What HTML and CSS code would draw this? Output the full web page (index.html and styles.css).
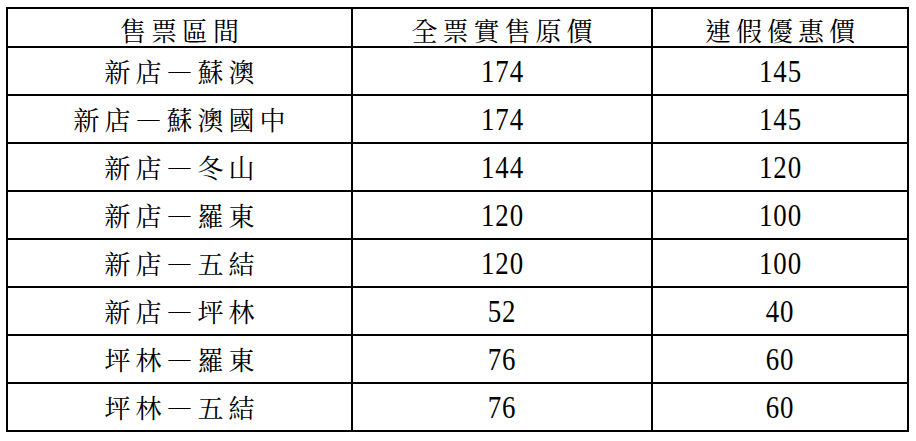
FILE: index.html
```html
<!DOCTYPE html>
<html lang="zh-Hant">
<head>
<meta charset="utf-8">
<link rel="stylesheet" href="styles.css">
</head>
<body>
<div class="wrap">
<table class="fare">
  <colgroup>
    <col class="c1"><col class="c2"><col class="c3">
  </colgroup>
  <thead>
    <tr class="head"><th class="zh">售票區間</th><th class="zh">全票實售原價</th><th class="zh">連假優惠價</th></tr>
  </thead>
  <tbody>
    <tr><td class="zh">新店—蘇澳</td><td><span class="num">174</span></td><td><span class="num">145</span></td></tr>
    <tr><td class="zh">新店—蘇澳國中</td><td><span class="num">174</span></td><td><span class="num">145</span></td></tr>
    <tr><td class="zh">新店—冬山</td><td><span class="num">144</span></td><td><span class="num">120</span></td></tr>
    <tr><td class="zh">新店—羅東</td><td><span class="num">120</span></td><td><span class="num">100</span></td></tr>
    <tr><td class="zh">新店—五結</td><td><span class="num">120</span></td><td><span class="num">100</span></td></tr>
    <tr><td class="zh">新店—坪林</td><td><span class="num">52</span></td><td><span class="num">40</span></td></tr>
    <tr><td class="zh">坪林—羅東</td><td><span class="num">76</span></td><td><span class="num">60</span></td></tr>
    <tr><td class="zh">坪林—五結</td><td><span class="num">76</span></td><td><span class="num">60</span></td></tr>
  </tbody>
</table>
</div>
</body>
</html>
```
FILE: styles.css
```css
html, body {
  margin: 0;
  padding: 0;
  background: #ffffff;
}
.wrap {
  padding: 7px 0 0 6px;
}
.fare {
  border-collapse: collapse;
  width: 901px;
  table-layout: fixed;
  border: 2px solid #000;
}
.c1 { width: 345px; }
.c2 { width: 300px; }
.c3 { width: 256px; }
.fare tr {
  height: 48px;
}
.fare tr.head {
  height: 39px;
}
.fare th, .fare td {
  border: 2px solid #000;
  padding: 0;
  text-align: center;
  vertical-align: middle;
  font-weight: 400;
  color: #000;
}
.zh {
  font-family: "Noto Serif CJK TC", "AR PL UMing TW", "Noto Sans CJK TC", sans-serif;
  font-size: 26px;
  letter-spacing: 5px;
  line-height: 1;
}
.fare .zh {
  padding-left: 5px;
}
.fare th.zh {
  padding-top: 5px;
}
.num {
  display: inline-block;
  font-family: "Liberation Serif", serif;
  font-size: 32px;
  line-height: 1;
  transform: scaleX(0.84);
  letter-spacing: 1px;
}
```
